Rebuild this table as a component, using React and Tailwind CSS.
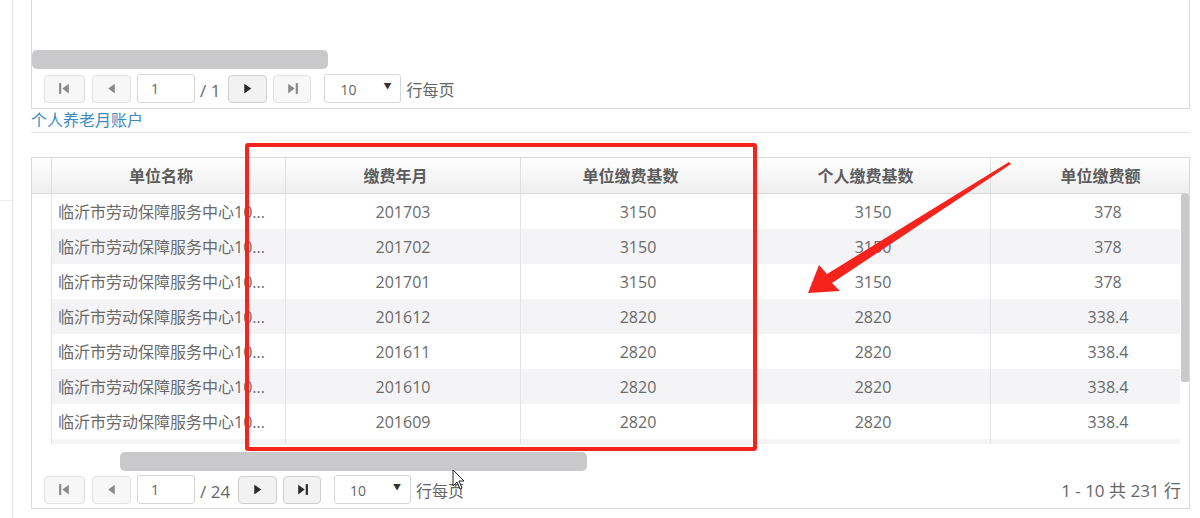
import React from "react";

const FONT = "font-['Open_Sans','Noto_Sans_CJK_SC',sans-serif]";

function Icon({ type, on }) {
  const c = on ? "#2b2b2b" : "#8a8a8a";
  return (
    <svg width="13" height="13" viewBox="0 0 12 12">
      {type === "first" && (
        <>
          <rect x="1" y="1" width="2" height="10" fill={c} />
          <polygon points="10,1.5 10,10.5 4,6" fill={c} />
        </>
      )}
      {type === "prev" && <polygon points="9,1.5 9,10.5 3,6" fill={c} />}
      {type === "next" && <polygon points="3,1.5 3,10.5 9.5,6" fill={c} />}
      {type === "last" && (
        <>
          <polygon points="2,1.5 2,10.5 8,6" fill={c} />
          <rect x="9" y="1" width="2" height="10" fill={c} />
        </>
      )}
    </svg>
  );
}

function Btn({ type, on, w }) {
  return (
    <div
      className={`h-[28px] ${w} flex items-center justify-center rounded-[4px] border ${
        on ? "border-[#cfcfcf] bg-[#f2f2f2]" : "border-[#e2e2e2] bg-[#f7f7f7]"
      }`}
    >
      <Icon type={type} on={on} />
    </div>
  );
}

function Pager({ total, lastOn, right }) {
  return (
    <div className="flex items-center h-[29px] pl-[12px] pr-[8px]">
      <Btn type="first" w="w-[41px]" />
      <div className="ml-[7px]">
        <Btn type="prev" w="w-[39px]" />
      </div>
      <div className="ml-[6px] h-[29px] w-[58px] border border-[#d6d6d6] rounded-[3px] bg-white flex items-center pl-[13px] text-[14px] text-[#666]">
        1
      </div>
      <div className="ml-[5px] text-[17px] text-[#666] leading-[20px] mt-[4px]">/ {total}</div>
      <div className="ml-[8px]">
        <Btn type="next" on w="w-[39px]" />
      </div>
      <div className="ml-[6px]">
        <Btn type="last" on={lastOn} w="w-[38px]" />
      </div>
      <div className="ml-[13px] h-[29px] w-[77px] border border-[#d6d6d6] rounded-[3px] bg-white flex items-center pl-[15px] pr-[9px] text-[14px] text-[#666]">
        <span className="mt-[2px]">10</span>
        <span className="ml-auto text-[8px] text-[#333] mb-[5px]">▼</span>
      </div>
      <div className="ml-[5px] text-[16px] text-[#666] mt-[3px]">行每页</div>
      {right && <div className="ml-auto text-[17px] text-[#666] mt-[2px]">{right}</div>}
    </div>
  );
}

const rows = [
  ["201703", "3150", "3150", "378"],
  ["201702", "3150", "3150", "378"],
  ["201701", "3150", "3150", "378"],
  ["201612", "2820", "2820", "338.4"],
  ["201611", "2820", "2820", "338.4"],
  ["201610", "2820", "2820", "338.4"],
  ["201609", "2820", "2820", "338.4"],
];

export default function App() {
  return (
    <div className={`relative w-[1200px] h-[518px] overflow-hidden bg-white flex ${FONT}`}>
      <div className="w-[13px] shrink-0 border-r border-[#e4e4e4] flex flex-col">
        <div className="h-[200px]" />
        <div className="border-t border-[#ececec]" />
      </div>
      <div className="ml-[18px] w-[1159px] flex flex-col">
        {/* top panel */}
        <div className="h-[109px] border-x border-b border-[#dadada] flex flex-col">
          <div className="h-[50px]" />
          <div className="h-[19px] w-[296px] rounded-[5px] bg-[#c9c9cb]" />
          <div className="mt-[5px]">
            <Pager total="1" lastOn={false} />
          </div>
        </div>
        <div className="mt-[1px] h-[23px] border-b border-[#e6e6e6] text-[16px] leading-[20px] text-[#3b8bbf]">
          个人养老月账户
        </div>
        {/* table panel */}
        <div className="mt-[24px] h-[352px] border border-[#d9d9d9] flex flex-col">
          <div className="h-[36px] shrink-0 flex overflow-hidden border-b border-[#dadada] bg-linear-to-b from-white to-[#eeeeee] text-[16px] font-semibold text-[#5c5c5c]">
            <div className="w-[20px] shrink-0 border-r border-[#dedede]" />
            {[
              ["单位名称", "w-[234px]"],
              ["缴费年月", "w-[235px]"],
              ["单位缴费基数", "w-[235px]"],
              ["个人缴费基数", "w-[235px]"],
              ["单位缴费额", "w-[235px]"],
            ].map(([t, w]) => (
              <div
                key={t}
                className={`${w} shrink-0 border-r border-[#dedede] flex items-center justify-center pr-[15px]`}
              >
                {t}
              </div>
            ))}
          </div>
          <div className="h-[250px] shrink-0 flex">
            <div className="flex-1 overflow-hidden text-[16px] text-[#6a6a6a]">
              {rows.map((r, i) => {
                const bg = i % 2 === 1 ? "bg-[#f4f4f6]" : "bg-white";
                return (
                  <div key={i} className="h-[35px] flex">
                    <div className="w-[20px] shrink-0 border-r border-[#e4e4e4] bg-white" />
                    <div className={`w-[234px] shrink-0 border-r border-[#e4e4e4] ${bg} flex items-center pl-[6px] whitespace-nowrap`}>
                      临沂市劳动保障服务中心10...
                    </div>
                    {r.map((v, j) => (
                      <div
                        key={j}
                        className={`w-[235px] shrink-0 border-r border-[#e4e4e4] ${bg} flex items-center justify-center`}
                      >
                        {v}
                      </div>
                    ))}
                  </div>
                );
              })}
              <div className="h-[35px] flex">
                <div className="w-[20px] shrink-0 border-r border-[#e4e4e4] bg-white" />
                <div className="w-[234px] shrink-0 border-r border-[#e4e4e4] bg-[#f4f4f6]" />
                <div className="w-[235px] shrink-0 border-r border-[#e4e4e4] bg-[#f4f4f6]" />
                <div className="w-[235px] shrink-0 border-r border-[#e4e4e4] bg-[#f4f4f6]" />
                <div className="w-[235px] shrink-0 border-r border-[#e4e4e4] bg-[#f4f4f6]" />
                <div className="w-[235px] shrink-0 border-r border-[#e4e4e4] bg-[#f4f4f6]" />
              </div>
            </div>
            <div className="w-[9px] shrink-0 pl-[1px]">
              <div className="h-[188px] w-[8px] rounded-[2px] bg-[#c9c9cb]" />
            </div>
          </div>
          <div className="ml-[88px] mt-[8px] h-[19px] w-[467px] rounded-[5px] bg-[#c9c9cb]" />
          <div className="mt-[4px]">
            <Pager total="24" lastOn right="1 - 10 共 231 行" />
          </div>
        </div>
      </div>

      {/* red highlight box */}
      <div className="absolute left-[245px] top-[143px] w-[512px] h-[308px] border-4 border-[#f5231b] rounded-[3px]" />

      {/* red arrow */}
      <svg className="absolute left-0 top-0" width="1200" height="518" viewBox="0 0 1200 518">
        <polygon
          points="808,293 840,291 832,283 1011,164 1009,162 827,274 819,265"
          fill="#f5231b"
        />
      </svg>

      {/* mouse cursor */}
      <svg className="absolute left-[452px] top-[469px]" width="14" height="22" viewBox="0 0 14 22">
        <path
          d="M1 1 L1 17 L5 13 L8 20 L10 19 L7 12 L12 12 Z"
          fill="white"
          stroke="#222"
          strokeWidth="1"
          strokeLinejoin="round"
        />
      </svg>
    </div>
  );
}
